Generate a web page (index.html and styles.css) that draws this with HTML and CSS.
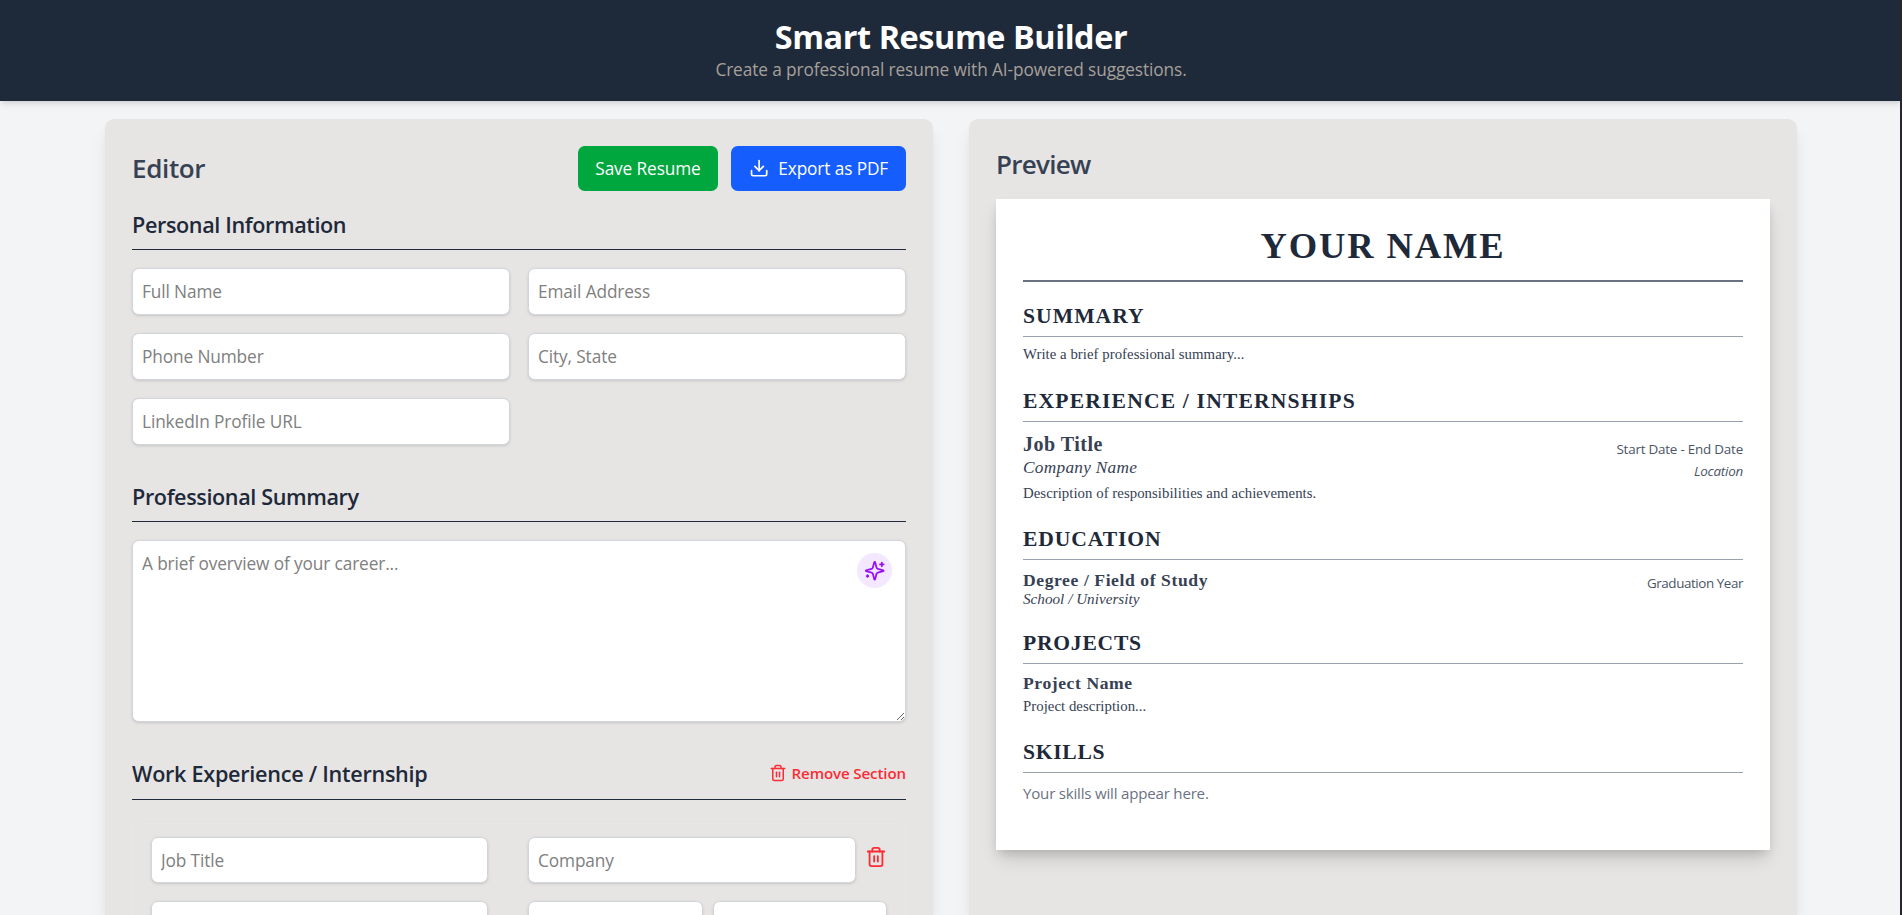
FILE: index.html
```
<!DOCTYPE html>
<html lang="en">
<head>
<meta charset="utf-8">
<title>Smart Resume Builder</title>
<link rel="stylesheet" href="styles.css">
</head>
<body>
<header class="site-header">
  <h1 class="site-title">Smart Resume Builder</h1>
  <p class="site-subtitle">Create a professional resume with AI-powered suggestions.</p>
</header>
<main class="workspace">
  <section class="panel">
    <div class="panel-head">
      <h2 class="panel-title">Editor</h2>
      <div class="actions">
        <button class="btn btn-save">Save Resume</button>
        <button class="btn btn-export">
          <svg class="icon icon-download" viewBox="0 0 24 24"><path d="M21 15v4a2 2 0 0 1-2 2H5a2 2 0 0 1-2-2v-4"/><path d="m7 10 5 5 5-5"/><path d="M12 15V3"/></svg>
          Export as PDF
        </button>
      </div>
    </div>

    <div class="form-section">
      <div class="section-head"><h3 class="section-title">Personal Information</h3></div>
      <div class="field-grid">
        <input class="field" placeholder="Full Name">
        <input class="field" placeholder="Email Address">
        <input class="field" placeholder="Phone Number">
        <input class="field" placeholder="City, State">
        <input class="field" placeholder="LinkedIn Profile URL">
      </div>
    </div>

    <div class="form-section">
      <div class="section-head"><h3 class="section-title">Professional Summary</h3></div>
      <div class="summary-wrap">
        <textarea class="field summary" placeholder="A brief overview of your career..."></textarea>
        <button class="ai-button" aria-label="Suggest">
          <svg class="icon icon-sparkles" viewBox="0 0 24 24"><path d="M9.937 15.5A2 2 0 0 0 8.5 14.063l-6.135-1.582a.5.5 0 0 1 0-.962L8.5 9.936A2 2 0 0 0 9.937 8.5l1.582-6.135a.5.5 0 0 1 .963 0L14.063 8.5A2 2 0 0 0 15.5 9.937l6.135 1.581a.5.5 0 0 1 0 .964L15.5 14.063a2 2 0 0 0-1.437 1.437l-1.582 6.135a.5.5 0 0 1-.963 0z"/><path d="M20 3v4"/><path d="M22 5h-4"/><path d="M4 17v2"/><path d="M5 18H3"/></svg>
        </button>
      </div>
    </div>

    <div class="form-section">
      <div class="section-head">
        <h3 class="section-title title-work">Work Experience / Internship</h3>
        <button class="remove">
          <svg class="icon icon-trash" viewBox="0 0 24 24"><path d="M3 6h18"/><path d="M19 6v14a2 2 0 0 1-2 2H7a2 2 0 0 1-2-2V6"/><path d="M8 6V4a2 2 0 0 1 2-2h4a2 2 0 0 1 2 2v2"/><path d="M10 11v6"/><path d="M14 11v6"/></svg>
          Remove Section
        </button>
      </div>
      <div class="entry">
        <div class="entry-left"><input class="field field-job" placeholder="Job Title"></div>
        <div class="entry-company">
          <input class="field" placeholder="Company">
          <button class="delete" aria-label="Delete">
            <svg class="icon icon-delete" viewBox="0 0 24 24"><path d="M3 6h18"/><path d="M19 6v14a2 2 0 0 1-2 2H7a2 2 0 0 1-2-2V6"/><path d="M8 6V4a2 2 0 0 1 2-2h4a2 2 0 0 1 2 2v2"/><path d="M10 11v6"/><path d="M14 11v6"/></svg>
          </button>
        </div>
        <div class="entry-left"><input class="field"></div>
        <div class="entry-dates"><input class="field"><input class="field"></div>
      </div>
    </div>
  </section>

  <section class="panel">
    <h2 class="panel-title preview-title">Preview</h2>
    <article class="resume">
      <h1 class="resume-name">YOUR NAME</h1>

      <h3 class="resume-heading">SUMMARY</h3>
      <p class="resume-text summary-text">Write a brief professional summary...</p>

      <h3 class="resume-heading heading-experience">EXPERIENCE / INTERNSHIPS</h3>
      <div class="job">
        <div>
          <p class="job-title">Job Title</p>
          <p class="job-company">Company Name</p>
        </div>
        <div class="meta meta-job">
          <p class="meta-line">Start Date - End Date</p>
          <p class="meta-line meta-place">Location</p>
        </div>
      </div>
      <p class="resume-text">Description of responsibilities and achievements.</p>

      <h3 class="resume-heading heading-education">EDUCATION</h3>
      <div class="study">
        <div>
          <p class="degree">Degree / Field of Study</p>
          <p class="school">School / University</p>
        </div>
        <div class="meta meta-study"><p class="meta-line meta-year">Graduation Year</p></div>
      </div>

      <h3 class="resume-heading heading-projects">PROJECTS</h3>
      <p class="project-name">Project Name</p>
      <p class="resume-text project-text">Project description...</p>

      <h3 class="resume-heading heading-skills">SKILLS</h3>
      <p class="skills">Your skills will appear here.</p>
    </article>
  </section>
</main>
</body>
</html>
```
FILE: styles.css
```
*, *::before, *::after { box-sizing: border-box; }
html { height: 100%; overflow: hidden; }
body {
  margin: 0;
  display: flex;
  flex-direction: column;
  height: 100vh;
  overflow: hidden;
  background: #f3f4f6;
  color: #1e2939;
  font-family: "Open Sans", "Noto Sans", sans-serif;
  font-size: 17.28px;
  line-height: 27px;
  letter-spacing: -0.12px;
}
/* window edge */
body::after {
  content: "";
  position: fixed;
  top: 0;
  right: 0;
  width: 2px;
  height: 100%;
  background: #25272c;
}
h1, h2, h3, p { margin: 0; }
button {
  border: 0;
  background: none;
  padding: 0;
  font: inherit;
  letter-spacing: inherit;
  color: inherit;
}
.icon {
  flex: none;
  display: block;
  fill: none;
  stroke: currentColor;
  stroke-width: 2;
  stroke-linecap: round;
  stroke-linejoin: round;
}

.site-header {
  flex: none;
  height: 101px;
  padding-top: 18px;
  background: #1e2939;
  text-align: center;
  box-shadow: 0 4.5px 6.75px -1px rgba(0, 0, 0, .1), 0 2px 4.5px -2px rgba(0, 0, 0, .1);
}
.site-title {
  color: #fff;
  font-size: 32.4px;
  font-weight: 700;
  line-height: 37.6px;
  letter-spacing: -0.42px;
}
.site-subtitle { color: #a6a09b; letter-spacing: -0.1px; }

.workspace {
  flex: 1;
  min-height: 0;
  display: grid;
  grid-template-columns: 1fr 1fr;
  grid-template-rows: 100%;
  gap: 36px;
  width: 1692px;
  margin: 18px auto 0;
}
.panel {
  min-height: 0;
  padding: 27px 27px 0;
  border-radius: 9px 9px 0 0;
  background: #e7e5e4;
  box-shadow: 0 11px 17px -3px rgba(0, 0, 0, .1), 0 4.5px 6.75px -4px rgba(0, 0, 0, .1);
}
.panel-head {
  display: flex;
  align-items: center;
  justify-content: space-between;
  margin-bottom: 17.6px;
}
.panel-title {
  color: #364153;
  font-size: 26px;
  font-weight: 550;
  line-height: 37px;
  letter-spacing: -0.35px;
}
.preview-title { margin-bottom: 15.8px; letter-spacing: -0.7px; }
.actions { display: flex; gap: 13px; }
.btn {
  display: flex;
  align-items: center;
  height: 45px;
  padding: 0 18px;
  border-radius: 6.75px;
  color: #fff;
  white-space: nowrap;
}
.btn-save { width: 140px; justify-content: center; background: #00a63e; }
.btn-export { width: 175px; gap: 9px; background: #155dfc; }
.icon-download { width: 20.25px; height: 20.25px; }

.form-section { margin-bottom: 36px; }
.section-head {
  display: flex;
  align-items: center;
  justify-content: space-between;
  margin-bottom: 18px;
  padding-bottom: 9px;
  border-bottom: 1px solid #1e2939;
}
.section-title {
  font-size: 21.6px;
  font-weight: 600;
  line-height: 31.5px;
  letter-spacing: -0.38px;
}
.title-work { letter-spacing: -0.27px; }
.field-grid {
  display: grid;
  grid-template-columns: 1fr 1fr;
  gap: 18px;
}
.field {
  display: block;
  width: 100%;
  min-width: 0;
  height: 46.9px;
  padding: 9px;
  border: 1px solid #d1d5dc;
  border-radius: 6.75px;
  background: #fff;
  color: #1e2939;
  font: inherit;
  letter-spacing: inherit;
  box-shadow: 0 1px 3.4px rgba(0, 0, 0, .1), 0 1px 2.25px -1px rgba(0, 0, 0, .1);
}
.field::placeholder { color: #808080; opacity: 1; }
.summary-wrap { position: relative; }
.summary { height: 181.8px; resize: vertical; }
.ai-button {
  position: absolute;
  top: 13px;
  right: 14px;
  display: grid;
  place-items: center;
  width: 35px;
  height: 35px;
  border-radius: 50%;
  background: #f3e8ff;
  color: #9810fa;
}
.icon-sparkles { width: 21.4px; height: 21.4px; }
.remove {
  display: flex;
  align-items: center;
  gap: 4.5px;
  margin-bottom: 1.5px;
  color: #fb2c36;
  font-size: 15.1px;
  font-weight: 600;
  line-height: 22px;
}
.icon-trash { width: 18px; height: 18px; }
.entry {
  display: grid;
  grid-template-columns: 1fr 1fr;
  gap: 18px;
  align-content: start;
  padding: 18px;
  border: 1px solid #e5e7eb;
  border-radius: 9px;
}
.entry-left { padding-right: 22.5px; }
.entry-company { display: flex; gap: 9px; }
.delete { align-self: flex-start; margin-top: 9px; color: #fb2c36; }
.icon-delete { width: 22px; height: 22px; }
.entry-dates { display: flex; gap: 10px; }

.resume {
  height: 651px;
  padding: 27px;
  background: #fff;
  color: #364153;
  font-family: "Liberation Serif", serif;
  box-shadow: 0 11px 17px -3px rgba(0, 0, 0, .15), 0 4.5px 9px -2px rgba(0, 0, 0, .12);
}
.resume-name {
  height: 56px;
  border-bottom: 2px solid #6a7282;
  color: #1e2939;
  text-align: center;
  font-size: 36.5px;
  line-height: 39.4px;
  letter-spacing: 1.9px;
}
.resume-heading {
  height: 36px;
  margin-top: 19px;
  border-bottom: 1px solid #99a1af;
  color: #1e2939;
  font-size: 21.6px;
  line-height: 30px;
  letter-spacing: 1.05px;
}
.heading-experience { letter-spacing: 1.17px; }
.heading-education { margin-top: 18.2px; letter-spacing: 0.9px; }
.heading-projects { margin-top: 19.2px; letter-spacing: 0.75px; }
.heading-skills { margin-top: 17.6px; letter-spacing: 0.7px; }
.resume-text {
  font-size: 14.8px;
  line-height: 23.6px;
  letter-spacing: 0.04px;
}
.summary-text { margin-top: 6.4px; margin-bottom: 19px; }
.job { display: flex; justify-content: space-between; margin-top: 10.8px; }
.job-title {
  font-size: 20px;
  font-weight: 700;
  line-height: 23.2px;
  letter-spacing: 0.5px;
}
.job-company {
  font-size: 17.3px;
  font-style: italic;
  line-height: 24px;
  letter-spacing: 0.28px;
}
.meta {
  color: #4a5565;
  font-family: "Open Sans", "Noto Sans", sans-serif;
  font-size: 13.4px;
  line-height: 22px;
  letter-spacing: -0.2px;
  text-align: right;
}
.meta-job { padding-top: 5.6px; }
.meta-place { font-style: italic; }
.meta-study { padding-top: 1.8px; }
.meta-year { letter-spacing: -0.42px; }
.study { display: flex; justify-content: space-between; margin-top: 10.6px; }
.degree, .project-name {
  font-size: 17.6px;
  font-weight: 700;
  line-height: 18px;
  letter-spacing: 0.58px;
}
.school {
  font-size: 15.2px;
  font-style: italic;
  line-height: 20px;
  letter-spacing: 0;
}
.project-name { margin-top: 9.6px; line-height: 20px; }
.project-text { margin-top: 2px; }
.skills {
  margin-top: 6.4px;
  color: #6a7282;
  font-family: "Open Sans", "Noto Sans", sans-serif;
  font-size: 15.1px;
  line-height: 28px;
  letter-spacing: -0.21px;
}
```
